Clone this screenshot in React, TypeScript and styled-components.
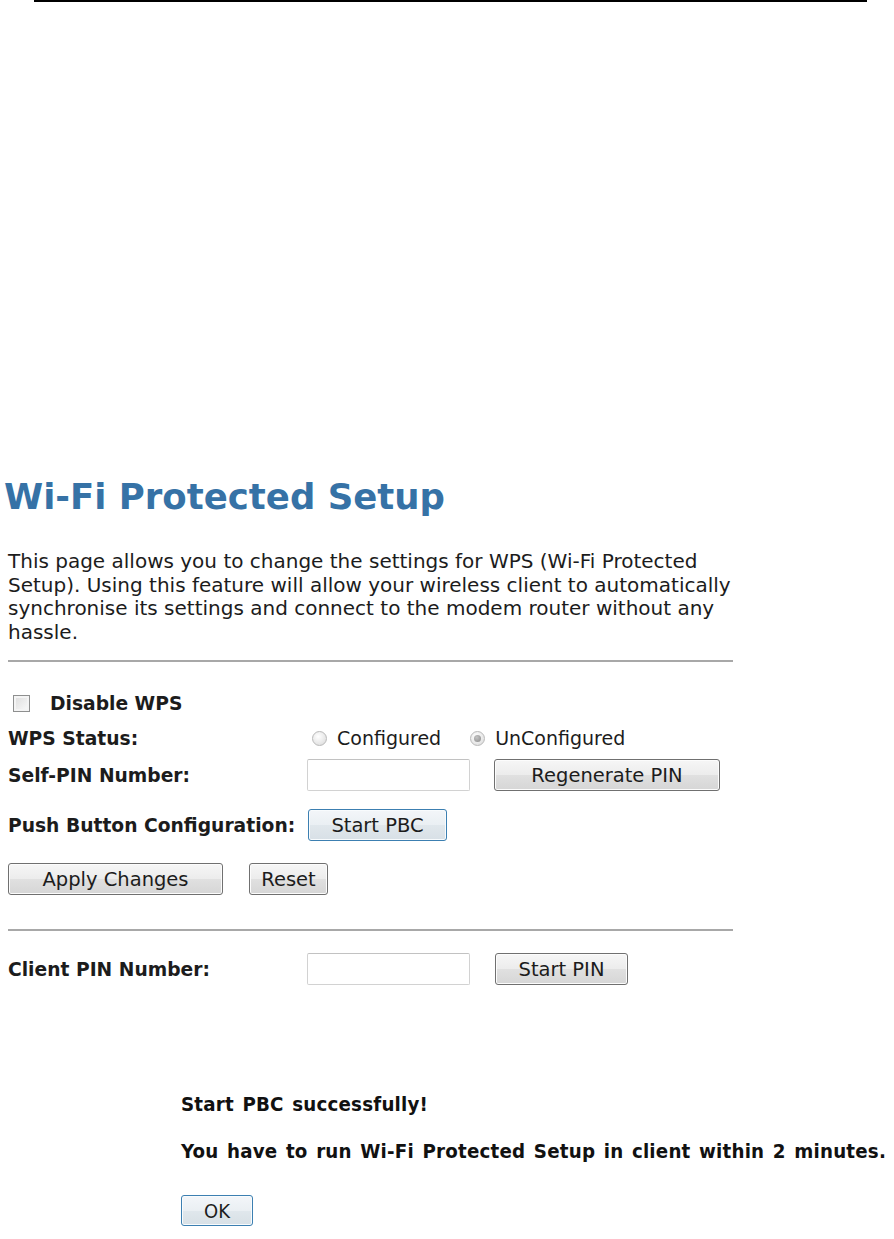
import React from "react";
import styled, { createGlobalStyle, css } from "styled-components";

const GlobalStyle = createGlobalStyle`
  html, body { margin: 0; padding: 0; background: #ffffff; }
  body {
    font-family: "DejaVu Sans", Verdana, sans-serif;
    color: #1c1c1c;
  }
`;

const Page = styled.div`
  width: 894px;
  height: 1239px;
  overflow: hidden;
  display: flex;
  flex-direction: column;
`;

const TopRule = styled.div`
  margin-left: 34px;
  width: 833px;
  height: 2px;
  background: #000;
`;

const Content = styled.main`
  margin-top: 475px;
  display: flex;
  flex-direction: column;
`;

const Title = styled.h1`
  margin: 0 0 0 4px;
  font-size: 35.5px;
  line-height: 40px;
  font-weight: bold;
  color: #3672a6;
  white-space: nowrap;
`;

const Description = styled.p`
  margin: 33px 0 0 8px;
  font-size: 20px;
  line-height: 23.5px;
  white-space: nowrap;
`;

const Rule = styled.div<{ $top: number }>`
  margin: ${(p) => p.$top}px 0 0 8px;
  width: 725px;
  height: 2px;
  background: #a8a8a8;
`;

const Row = styled.div<{ $top: number; $height: number }>`
  margin-top: ${(p) => p.$top}px;
  height: ${(p) => p.$height}px;
  padding-left: 8px;
  display: grid;
  grid-template-columns: 299px auto;
  align-items: center;
`;

const FlatRow = styled.div<{ $top: number; $gap: number; $indent?: number }>`
  margin-top: ${(p) => p.$top}px;
  padding-left: ${(p) => p.$indent ?? 8}px;
  display: flex;
  align-items: center;
  gap: ${(p) => p.$gap}px;
`;

const Label = styled.span`
  font-size: 18.7px;
  font-weight: bold;
  white-space: nowrap;
`;

const Controls = styled.div<{ $gap: number }>`
  display: flex;
  align-items: center;
  gap: ${(p) => p.$gap}px;
`;

const CheckBox = styled.span`
  box-sizing: border-box;
  width: 17px;
  height: 17px;
  margin-left: 5px;
  border: 1px solid #8e8f8f;
  background: linear-gradient(135deg, #dcdcdc, #fbfbfb);
  box-shadow: inset 0 0 0 2px #f4f4f4;
`;

const RadioOption = styled.span<{ $offset: number }>`
  margin-left: ${(p) => p.$offset}px;
  display: inline-flex;
  align-items: center;
  gap: 10px;
  font-size: 19px;
  white-space: nowrap;
`;

const RadioDot = styled.span<{ $checked?: boolean }>`
  box-sizing: border-box;
  width: 15px;
  height: 15px;
  border-radius: 50%;
  border: 1px solid #b9b9b9;
  background: radial-gradient(circle at 40% 35%, #ffffff, #d8d8d8);
  display: inline-flex;
  align-items: center;
  justify-content: center;
  ${(p) =>
    p.$checked &&
    css`
      &::after {
        content: "";
        width: 7px;
        height: 7px;
        border-radius: 50%;
        background: radial-gradient(circle at 40% 35%, #c4c4c4, #8a8a8a);
      }
    `}
`;

const TextBox = styled.span`
  box-sizing: border-box;
  width: 163px;
  height: 32px;
  border: 1px solid #d2d2d2;
  border-top-color: #c2c2c2;
  border-radius: 2px;
  background: #fff;
`;

const Button = styled.button<{ $width: number; $height?: number; $focused?: boolean }>`
  box-sizing: border-box;
  width: ${(p) => p.$width}px;
  height: ${(p) => p.$height ?? 32}px;
  padding: 0;
  font-family: "DejaVu Sans", Verdana, sans-serif;
  font-size: 19.5px;
  color: #1c1c1c;
  border-radius: 3px;
  border: 1px solid #707070;
  background: linear-gradient(#f6f6f6 0%, #ececec 50%, #e0e0e0 51%, #d6d6d6 100%);
  box-shadow: inset 0 0 0 1px #fcfcfc;
  ${(p) =>
    p.$focused &&
    css`
      border-color: #3c7fb1;
      background: linear-gradient(#f3f6f9 0%, #eaeff3 50%, #e0e7ec 51%, #d8e0e6 100%);
      box-shadow: inset 0 0 0 1px #f8fbfd;
    `}
`;

const Message = styled.div`
  margin: 107px 0 0 181px;
  display: flex;
  flex-direction: column;
  align-items: flex-start;
  font-family: "DejaVu Sans Condensed", "DejaVu Sans", sans-serif;
  font-stretch: condensed;
  font-weight: bold;
  font-size: 20.3px;
  letter-spacing: 0.2px;
  word-spacing: 2px;
  line-height: 24px;
  color: #111;
`;

const MessageLine = styled.div<{ $top: number }>`
  margin-top: ${(p) => p.$top}px;
  white-space: nowrap;
`;

const OkButton = styled(Button)`
  margin-top: 32px;
  font-family: "DejaVu Sans Condensed", "DejaVu Sans", sans-serif;
  font-stretch: condensed;
  font-weight: normal;
  font-size: 20px;
  letter-spacing: 0;
  word-spacing: 0;
`;

export default function App() {
  return (
    <Page>
      <GlobalStyle />
      <TopRule />
      <Content>
        <Title>Wi-Fi Protected Setup</Title>
        <Description>
          This page allows you to change the settings for WPS (Wi-Fi Protected
          <br />
          Setup). Using this feature will allow your wireless client to automatically
          <br />
          synchronise its settings and connect to the modem router without any
          <br />
          hassle.
        </Description>
        <Rule $top={16} />

        <FlatRow $top={31} $gap={20} $indent={8}>
          <CheckBox />
          <Label>Disable WPS</Label>
        </FlatRow>

        <Row $top={13} $height={22}>
          <Label>WPS Status:</Label>
          <Controls $gap={0}>
            <RadioOption $offset={5}>
              <RadioDot />
              Configured
            </RadioOption>
            <RadioOption $offset={29}>
              <RadioDot $checked />
              UnConfigured
            </RadioOption>
          </Controls>
        </Row>

        <Row $top={10} $height={32}>
          <Label>Self-PIN Number:</Label>
          <Controls $gap={24}>
            <TextBox />
            <Button $width={226}>Regenerate PIN</Button>
          </Controls>
        </Row>

        <Row $top={18} $height={32}>
          <Label>Push Button Configuration:</Label>
          <Controls $gap={0}>
            <Button $width={139} $focused style={{ marginLeft: 1 }}>
              Start PBC
            </Button>
          </Controls>
        </Row>

        <FlatRow $top={22} $gap={26}>
          <Button $width={215}>Apply Changes</Button>
          <Button $width={79}>Reset</Button>
        </FlatRow>

        <Rule $top={34} />

        <Row $top={22} $height={32}>
          <Label>Client PIN Number:</Label>
          <Controls $gap={25}>
            <TextBox />
            <Button $width={133}>Start PIN</Button>
          </Controls>
        </Row>

        <Message>
          <MessageLine $top={0}>Start PBC successfully!</MessageLine>
          <MessageLine $top={23}>
            You have to run Wi-Fi Protected Setup in client within 2 minutes.
          </MessageLine>
          <OkButton $width={72} $height={31} $focused>
            OK
          </OkButton>
        </Message>
      </Content>
    </Page>
  );
}
